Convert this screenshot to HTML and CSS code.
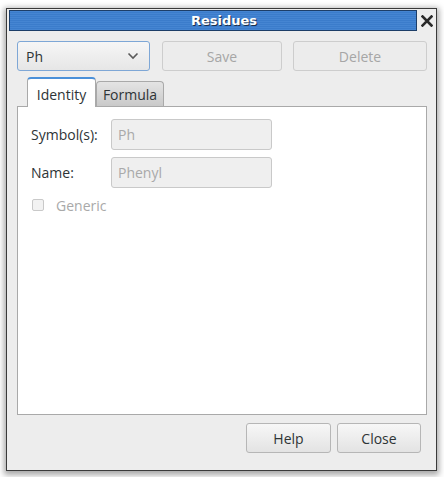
FILE: index.html
```html
<!DOCTYPE html>
<html>
<head>
<meta charset="utf-8">
<link rel="stylesheet" href="styles.css">
</head>
<body>
<div class="window">
  <div class="titlerow">
    <div class="titlebar"><span class="title">Residues</span></div>
    <div class="closex">
      <svg width="12" height="12" viewBox="0 0 12 12"><path d="M1.5 1.5 L10.5 10.5 M10.5 1.5 L1.5 10.5" stroke="#2a2a2a" stroke-width="2.6" stroke-linecap="square"/></svg>
    </div>
  </div>
  <div class="content">
    <div class="toprow">
      <div class="combo"><span>Ph</span>
        <svg width="12" height="8" viewBox="0 0 12 8"><path d="M1.5 1.5 L6 6 L10.5 1.5" fill="none" stroke="#5a5a5a" stroke-width="1.6"/></svg>
      </div>
      <div class="btn disabled save">Save</div>
      <div class="btn disabled delete">Delete</div>
    </div>
    <div class="notebook">
      <div class="tabs">
        <div class="tab active">Identity</div>
        <div class="tab">Formula</div>
      </div>
      <div class="page">
        <div class="field">
          <div class="label">Symbol(s):</div>
          <div class="entry">Ph</div>
        </div>
        <div class="field">
          <div class="label">Name:</div>
          <div class="entry">Phenyl</div>
        </div>
        <div class="check">
          <span class="box"></span><span class="checklabel">Generic</span>
        </div>
      </div>
    </div>
    <div class="bottomrow">
      <div class="btn help">Help</div>
      <div class="btn close">Close</div>
    </div>
  </div>
</div>
</body>
</html>
```
FILE: styles.css
```css
* { box-sizing: border-box; }
html, body { margin: 0; padding: 0; }
body {
  background: #ffffff;
  width: 444px;
  height: 477px;
  overflow: hidden;
  font-family: "Open Sans", "DejaVu Sans", sans-serif;
  font-size: 14px;
  color: #2e3436;
}
.window {
  margin: 8px 0 0 6px;
  width: 431px;
  height: 463px;
  background: #ededed;
  border: 1px solid #3a3a3a;
  box-shadow: 0 2px 6px 2px rgba(0,0,0,0.35);
  padding: 1px 0 0 2px;
}
.titlerow {
  display: flex;
  align-items: center;
  height: 21px;
}
.titlebar {
  width: 408px;
  height: 21px;
  border: 1px solid #1d3e68;
  background: repeating-linear-gradient(to bottom, #4585d2 0px, #4585d2 1px, #3b7ccb 1px, #3b7ccb 2px);
  display: flex;
  align-items: center;
  justify-content: center;
  padding-left: 22px;
}
.title {
  color: #ffffff;
  font-family: "DejaVu Sans", sans-serif;
  font-weight: bold;
  font-size: 13px;
  text-shadow: 1px 1px 0 #1b2f4a;
}
.closex {
  margin-left: 4px;
  width: 12px;
  height: 12px;
  display: flex;
}
.content {
  padding: 10px 0 0 8px;
}
.toprow {
  display: flex;
  height: 30px;
}
.combo {
  width: 133px;
  height: 30px;
  border: 1px solid #7ea7d6;
  border-radius: 3px;
  background: linear-gradient(#f6f6f6, #e6e6e6);
  display: flex;
  align-items: center;
  justify-content: space-between;
  padding: 0 10px 0 8px;
}
.btn {
  height: 30px;
  border: 1px solid #b6b6b6;
  border-radius: 3px;
  background: linear-gradient(#f7f7f7, #e3e3e3);
  display: flex;
  align-items: center;
  justify-content: center;
}
.btn.disabled {
  background: #ececec;
  border-color: #cdcdcd;
  color: #a6a6a6;
}
.save { width: 120px; margin-left: 12px; }
.delete { width: 134px; margin-left: 11px; }
.notebook {
  margin-top: 6px;
  width: 410px;
}
.tabs {
  display: flex;
  padding-left: 10px;
  height: 29px;
  align-items: flex-end;
}
.tab {
  height: 25px;
  padding: 0 4px;
  border: 1px solid #a9a9a9;
  border-bottom: none;
  border-radius: 4px 4px 0 0;
  background: linear-gradient(#e4e4e4, #c9c9c9);
  display: flex;
  align-items: center;
  width: 68px;
  justify-content: center;
}
.tab.active {
  height: 30px;
  background: #ffffff;
  border-color: #a9a9a9;
  border-top: 2px solid #4a90d9;
  width: 69px;
  margin-bottom: -1px;
  position: relative;
  padding-top: 2px;
}
.page {
  height: 309px;
  background: #ffffff;
  border: 1px solid #a9a9a9;
  padding: 12px 0 0 13px;
}
.field {
  display: flex;
  align-items: center;
  height: 31px;
  margin-bottom: 7px;
}
.label {
  width: 80px;
}
.entry {
  width: 161px;
  height: 31px;
  border: 1px solid #c9c9c9;
  border-radius: 3px;
  background: #efefef;
  color: #a9a9a9;
  display: flex;
  align-items: center;
  padding-left: 6px;
}
.check {
  display: flex;
  align-items: center;
  height: 20px;
  margin-top: 6px;
  margin-left: 1px;
}
.box {
  width: 12px;
  height: 12px;
  border: 1px solid #c9c9c9;
  border-radius: 2px;
  background: #f2f2f2;
}
.checklabel {
  margin-left: 12px;
  color: #a9a9a9;
}
.bottomrow {
  display: flex;
  justify-content: flex-end;
  margin-top: 8px;
  width: 404px;
}
.help { width: 85px; }
.close { width: 84px; margin-left: 6px; }
```
